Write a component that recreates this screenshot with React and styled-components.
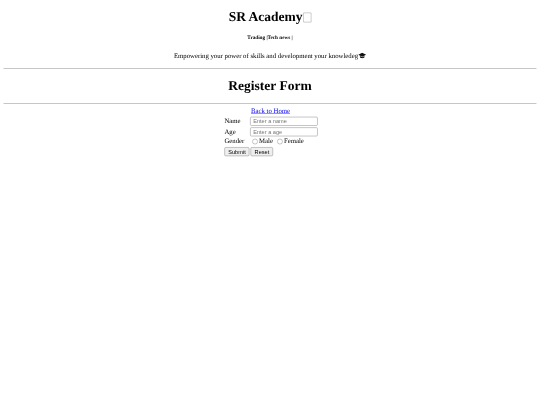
import React from 'react';
import styled, { createGlobalStyle } from 'styled-components';

const GlobalStyle = createGlobalStyle`
  html, body {
    margin: 0;
    padding: 0;
    background: #fff;
  }
  body {
    font-family: "Liberation Serif", "Times New Roman", serif;
    font-size: 16px;
    color: #000;
    text-rendering: geometricPrecision;
  }
`;

const Frame = styled.div`
  width: 540px;
  height: 405px;
  overflow: hidden;
  filter: blur(0.25px);
`;

// the reference is a 1280 wide page shot down to 540
const Page = styled.div`
  display: flow-root;
  width: 1280px;
  height: 960px;
  padding: 0 8px;
  box-sizing: border-box;
  background: #fff;
  transform: scale(0.421875);
  transform-origin: top left;
`;

const Masthead = styled.header`
  text-align: center;
`;

const Title = styled.h1`
  margin: 21.44px 0;
  font-size: 32px;
  font-weight: 700;
`;

const MissingGlyph = styled.span`
  display: inline-block;
  width: 19px;
  height: 23px;
  margin-left: 2px;
  vertical-align: -3px;
  border: 1px solid #8a8a8a;
  border-radius: 1px;
  box-sizing: border-box;
`;

const TopLinks = styled.h6`
  margin: 24.97px 0;
  font-size: 12.3px;
  line-height: 12px;
  font-weight: 700;
`;

const Tagline = styled.p`
  margin: 16px 0;
  line-height: 25px;
`;

const CapIcon = styled.svg`
  width: 19px;
  height: 14px;
  vertical-align: -2px;
`;

const Rule = styled.hr`
  height: 2px;
  margin: 8px 0;
  border: 0;
  border-radius: 1px;
  background: #b4b4b4;
`;

const PageTitle = styled.h1`
  margin: 21.44px 0 22.5px;
  font-size: 32px;
  font-weight: 700;
  text-align: center;
`;

const FormGrid = styled.form`
  display: grid;
  grid-template-columns: max-content 160px;
  justify-content: center;
  column-gap: 14px;
  row-gap: 4px;
  margin-top: 9px;
  padding-left: 5px;
`;

const HomeLink = styled.a`
  grid-column: 2;
  padding-left: 2px;
  color: #0000ee;
  text-decoration: underline;
`;

const FieldLabel = styled.label`
  display: flex;
  align-items: center;
`;

const TextField = styled.input`
  width: 160px;
  height: 21px;
  padding: 1px 6px;
  box-sizing: border-box;
  border: 1.2px solid #767676;
  border-radius: 3px;
  background: #fff;
  font-family: "Liberation Sans", Arial, sans-serif;
  font-size: 13.33px;

  &::placeholder {
    color: #757575;
  }
`;

const RadioRow = styled.div`
  display: flex;
  align-items: center;
`;

const RadioInput = styled.input`
  appearance: none;
  width: 13px;
  height: 13px;
  margin: 0 3px 2px 5px;
  border: 1.2px solid #767676;
  border-radius: 50%;
  background: #fff;
`;

const RadioText = styled.label`
  margin-right: 5px;
`;

const ButtonRow = styled.div`
  grid-column: 1 / 3;
  display: flex;
  gap: 3px;
`;

const FormButton = styled.button`
  height: 21px;
  padding: 1px 8px;
  border: 1.2px solid #767676;
  border-radius: 3px;
  background: #efefef;
  color: #000;
  font-family: "Liberation Sans", Arial, sans-serif;
  font-size: 13.33px;
`;

function GradCap() {
  return (
    <CapIcon viewBox="0 0 16 12" aria-hidden="true">
      <path d="M8 0 L16 4 L8 8 L0 4 Z" fill="#111" />
      <path d="M3.5 6.6 V9.6 Q8 12.6 12.5 9.6 V6.6 L8 9 Z" fill="#111" />
    </CapIcon>
  );
}

export default function App() {
  return (
    <>
      <GlobalStyle />
      <Frame>
        <Page>
          <Masthead>
            <Title>SR Academy<MissingGlyph /></Title>
            <TopLinks>Trading |Tech news |</TopLinks>
            <Tagline>Empowering your power of skills and development your knowledeg<GradCap /></Tagline>
          </Masthead>
          <Rule />
          <PageTitle>Register Form</PageTitle>
          <Rule />
          <FormGrid onSubmit={e => e.preventDefault()}>
            <HomeLink href="#">Back to Home</HomeLink>
            <FieldLabel>Name</FieldLabel>
            <TextField placeholder="Enter a name" />
            <FieldLabel>Age</FieldLabel>
            <TextField placeholder="Enter a age" />
            <FieldLabel>Gender</FieldLabel>
            <RadioRow>
              <RadioInput type="radio" name="gender" /><RadioText>Male</RadioText>
              <RadioInput type="radio" name="gender" /><RadioText>Female</RadioText>
            </RadioRow>
            <ButtonRow>
              <FormButton type="submit">Submit</FormButton>
              <FormButton type="reset">Reset</FormButton>
            </ButtonRow>
          </FormGrid>
        </Page>
      </Frame>
    </>
  );
}
